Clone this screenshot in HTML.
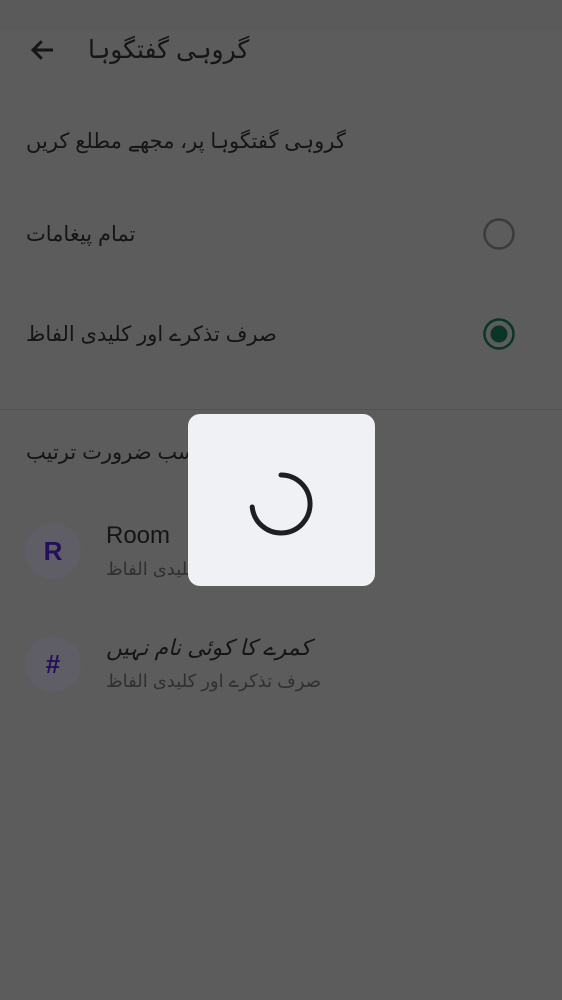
<!DOCTYPE html>
<html><head><meta charset="utf-8"><style>
body{margin:0;width:562px;height:1000px;background:#5c5c5c;position:relative;overflow:hidden;font-family:"Liberation Sans","DejaVu Sans",sans-serif;color:#151515}
.t{position:absolute;white-space:nowrap;line-height:1}
.av{position:absolute;left:25px;width:56px;height:56px;border-radius:50%;background:#5f5d66;color:#24105a;font-weight:bold;font-size:26px;display:flex;align-items:center;justify-content:center}
</style></head><body>
<div style="position:absolute;left:0;top:0;width:562px;height:30px;background:#5a5a5a"></div>
<svg style="position:absolute;left:28px;top:35px" width="30" height="30" viewBox="0 0 24 24"><path d="M20 12H5M11 5l-7 7 7 7" fill="none" stroke="#151515" stroke-width="2.4"/></svg>
<div class="t" style="left:88px;top:38px;font-size:25px" dir="rtl">گروہی گفتگوہا</div>
<div class="t" style="left:26px;top:131px;font-size:21px" dir="rtl">گروہی گفتگوہا پر، مجھے مطلع کریں</div>
<div class="t" style="left:26px;top:224px;font-size:21px" dir="rtl">تمام پیغامات</div>
<div class="t" style="left:26px;top:324px;font-size:21px" dir="rtl">صرف تذکرے اور کلیدی الفاظ</div>
<svg style="position:absolute;left:482px;top:217px" width="34" height="34"><circle cx="17" cy="17" r="14.5" fill="none" stroke="#3a3b3e" stroke-width="2.5"/></svg>
<svg style="position:absolute;left:482px;top:317px" width="34" height="34"><circle cx="17" cy="17" r="14.5" fill="none" stroke="#0a3527" stroke-width="2.5"/><circle cx="17" cy="17" r="8.5" fill="#0a3527"/></svg>
<div style="position:absolute;left:0;top:409px;width:562px;height:1px;background:#525252"></div>
<div class="t" style="left:26px;top:442px;font-size:21px" dir="rtl">حسب ضرورت ترتیب</div>
<div class="av" style="top:523px">R</div>
<div class="t" style="left:106px;top:524px;font-size:24px">Room</div>
<div class="t" style="left:106px;top:560px;font-size:18px;color:#303030" dir="rtl">صرف تذکرے اور کلیدی الفاظ</div>
<div class="av" style="top:636px">#</div>
<div class="t" style="left:106px;top:637px;font-size:22px;font-style:italic" dir="rtl">کمرے کا کوئی نام نہیں</div>
<div class="t" style="left:106px;top:672px;font-size:18px;color:#303030" dir="rtl">صرف تذکرے اور کلیدی الفاظ</div>
<div style="position:absolute;left:188px;top:414px;width:187px;height:172px;border-radius:12px;background:#f0f1f5"></div>
<svg style="position:absolute;left:246px;top:469px" width="70" height="70" viewBox="0 0 70 70"><path d="M35 6 A29 29 0 1 1 6.2 38" fill="none" stroke="#1e1f24" stroke-width="5" stroke-linecap="round"/></svg>
</body></html>
